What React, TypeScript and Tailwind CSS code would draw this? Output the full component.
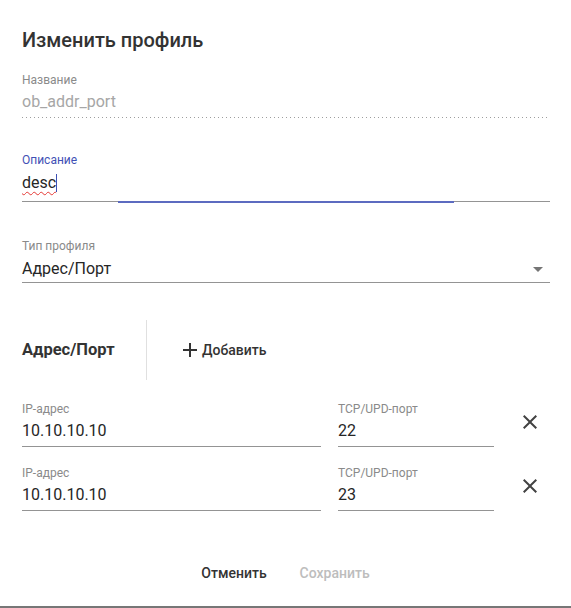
import React from "react";

function CloseIcon() {
  return (
    <svg viewBox="0 0 24 24" className="w-[24px] h-[24px] fill-[#424242]">
      <path d="M19 6.41L17.59 5 12 10.59 6.41 5 5 6.41 10.59 12 5 17.59 6.41 19 12 13.41 17.59 19 19 17.59 13.41 12z" />
    </svg>
  );
}

function Row({ ip, port }: { ip: string; port: string }) {
  return (
    <div className="flex items-start">
      <div className="w-[299px] border-b border-[#949494]">
        <div className="text-[12px] leading-[14px] text-[#8a8a8a]">IP-адрес</div>
        <div className="text-[16px] leading-[19px] text-[#262626] mt-[5px] pb-[6px]">{ip}</div>
      </div>
      <div className="w-[156px] ml-[17px] border-b border-[#949494]">
        <div className="text-[12px] leading-[14px] text-[#8a8a8a]">TCP/UPD-порт</div>
        <div className="text-[16px] leading-[19px] text-[#262626] mt-[5px] pb-[6px]">{port}</div>
      </div>
      <div className="ml-[24px] mt-[8px]">
        <CloseIcon />
      </div>
    </div>
  );
}

export default function App() {
  return (
    <div className="w-[571px] h-[608px] bg-white border-b-2 border-[#777] font-['Roboto',sans-serif] px-[22px] pt-[28px] flex flex-col">
      <div className="text-[20px] leading-[24px] font-medium text-[#333]">Изменить профиль</div>

      <div className="mt-[21px] w-[528px]">
        <div className="text-[12px] leading-[14px] text-[#8a8a8a]">Название</div>
        <div className="text-[16px] leading-[19px] text-[#a6a6a6] mt-[5px] pb-[6px]">ob_addr_port</div>
        <div className="h-px bg-[linear-gradient(to_right,#9e9e9e_25%,transparent_25%)] bg-[length:4px_1px] bg-repeat-x"></div>
      </div>

      <div className="mt-[35px] w-[528px] relative">
        <div className="text-[12px] leading-[14px] text-[#3f51b5]">Описание</div>
        <div className="text-[16px] leading-[19px] text-[#262626] mt-[6px] pb-[9px] border-b border-[#949494] flex items-center">
          <span className="underline decoration-wavy decoration-[#e53935] decoration-1 underline-offset-[3px]">desc</span>
          <span className="inline-block w-px h-[18px] bg-[#3f51b5]"></span>
        </div>
        <div className="absolute left-[96px] bottom-[-1px] w-[336px] h-[2px] bg-[#5c6bc0]"></div>
      </div>

      <div className="mt-[37px] w-[528px]">
        <div className="text-[12px] leading-[14px] text-[#8a8a8a]">Тип профиля</div>
        <div className="text-[16px] leading-[19px] text-[#262626] mt-[6px] pb-[4px] border-b border-[#949494] flex items-center justify-between">
          <span>Адрес/Порт</span>
          <svg viewBox="0 0 24 24" className="w-[24px] h-[24px] fill-[#757575] -my-[3px]">
            <path d="M7 10l5 5 5-5z" />
          </svg>
        </div>
      </div>

      <div className="mt-[37px] flex items-center h-[60px]">
        <div className="text-[16.5px] font-bold text-[#333] w-[124px]">Адрес/Порт</div>
        <div className="w-px h-[60px] bg-[#e0e0e0]"></div>
        <div className="ml-[31px] flex items-center text-[14px] font-medium text-[#333]">
          <svg viewBox="0 0 24 24" className="w-[24px] h-[24px] fill-[#333]">
            <path d="M19 13h-6v6h-2v-6H5v-2h6V5h2v6h6v2z" />
          </svg>
          <span>Добавить</span>
        </div>
      </div>

      <div className="mt-[22px] flex flex-col gap-[19px]">
        <Row ip="10.10.10.10" port="22" />
        <Row ip="10.10.10.10" port="23" />
      </div>

      <div className="mt-[52px] flex justify-center gap-[17px] text-[14px] font-medium">
        <span className="px-[8px] text-[#333]">Отменить</span>
        <span className="px-[8px] text-[#bdbdbd]">Сохранить</span>
      </div>
    </div>
  );
}
